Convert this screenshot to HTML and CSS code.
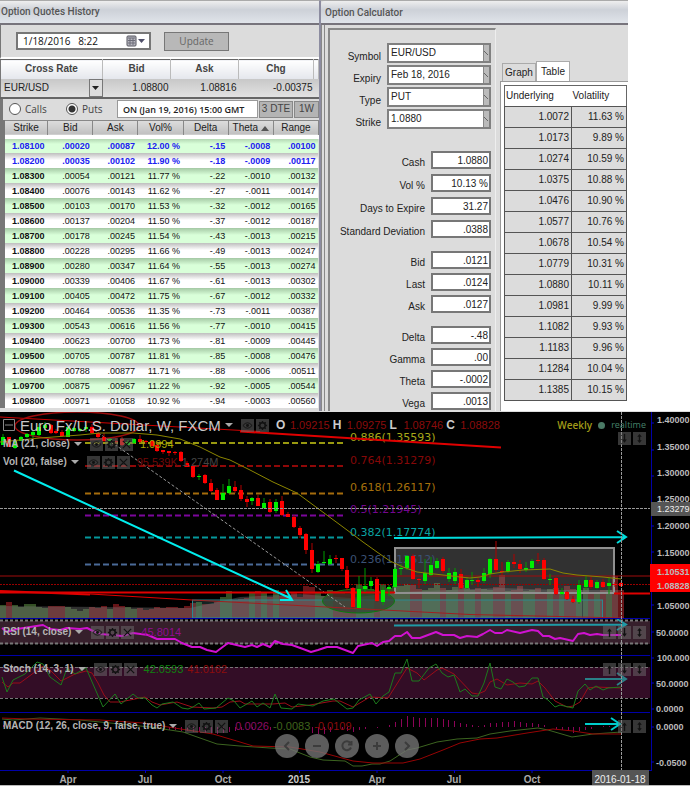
FILE: index.html
```html
<!DOCTYPE html>
<html lang="en">
<head>
<meta charset="utf-8">
<title>Option Quotes History</title>
<link rel="stylesheet" href="styles.css">
</head>
<body>
<svg class="defs" aria-hidden="true">
  <symbol id="eye" viewBox="0 0 12 12"><path d="M1 6Q6 0 11 6Q6 12 1 6Z" fill="none" stroke="currentColor"/><circle cx="6" cy="6" r="1.6" fill="currentColor"/></symbol>
  <symbol id="gear" viewBox="0 0 12 12"><circle cx="6" cy="6" r="3" fill="none" stroke="currentColor" stroke-width="1.6"/><path d="M6 1V3M6 9V11M1 6H3M9 6H11M2.5 2.5L4 4M8 8L9.500 9.500M9.500 2.500L8 4M4 8L2.500 9.500" stroke="currentColor" stroke-width="1.5"/></symbol>
  <symbol id="cross" viewBox="0 0 12 12"><path d="M2 2L10 10M10 2L2 10" stroke="currentColor" stroke-width="1.3"/></symbol>
  <symbol id="up" viewBox="0 0 12 12"><path d="M6 11V3" stroke="currentColor" stroke-width="1.5"/><path d="M3.500 5L6 1.500L8.500 5Z" fill="currentColor"/></symbol>
  <symbol id="down" viewBox="0 0 12 12"><path d="M6 1V9" stroke="currentColor" stroke-width="1.500"/><path d="M3.500 7L6 10.500L8.500 7Z" fill="currentColor"/></symbol>
  <symbol id="updown" viewBox="0 0 12 12"><path d="M6 3V9" stroke="currentColor" stroke-width="1.500"/><path d="M3.500 4L6 1L8.500 4ZM3.500 8L6 11L8.500 8Z" fill="currentColor"/></symbol>
</svg>
<main>
<div class="windows">
  <section class="window quotes">
    <h1 class="title">Option Quotes History</h1>
    <form class="toolbar">
      <div class="date"><input type="text" aria-label="Date and time" value="1/18/2016   8:22"><svg width="20" height="12" viewBox="0 0 20 12"><rect x="1" y="1" width="9" height="10" rx="1" fill="#b8b8c0" stroke="#55555f"/><path d="M2 3H9M2 5.500H9M2 8H9M4 3V10M7 3V10" stroke="#6c6c78"/><path d="M12 4H19L15.500 8Z" fill="#50506a"/></svg></div>
      <button type="button" class="update">Update</button>
    </form>
    <table class="rates">
      <thead><tr><th>Cross Rate</th><th>Bid</th><th>Ask</th><th>Chg</th><th></th></tr></thead>
      <tbody><tr><td><span class="pair">EUR/USD<button type="button" aria-label="Choose pair"><svg width="7" height="4" viewBox="0 0 7 4"><path d="M0 0H7L3.500 4Z" fill="#222"/></svg></button></span></td><td>1.08800</td><td>1.08816</td><td colspan="2">-0.00375</td></tr></tbody>
    </table>
    <form class="filters">
      <label class="kind calls"><input type="radio" name="kind">Calls</label>
      <label class="kind"><input type="radio" name="kind" checked>Puts</label>
      <input class="expiry" type="text" aria-label="Expiry" value="ON (Jan 19, 2016) 15:00 GMT">
      <button type="button" class="term">3 DTE</button>
      <button type="button" class="term short">1W</button>
    </form>
    <table class="chain">
      <thead><tr><th>Strike</th><th>Bid</th><th>Ask</th><th>Vol%</th><th>Delta</th><th>Theta <svg width="8" height="5" viewBox="0 0 8 5"><path d="M0 5L4 0L8 5Z" fill="#555"/></svg></th><th>Range</th></tr></thead>
      <tbody>
        <tr class="picked"><td>1.08100</td><td>.00020</td><td>.00087</td><td>12.00 %</td><td>-.15</td><td>-.0008</td><td>.00100</td></tr>
        <tr class="picked"><td>1.08200</td><td>.00035</td><td>.00102</td><td>11.90 %</td><td>-.18</td><td>-.0009</td><td>.00117</td></tr>
        <tr><td>1.08300</td><td>.00054</td><td>.00121</td><td>11.77 %</td><td>-.22</td><td>-.0010</td><td>.00132</td></tr>
        <tr><td>1.08400</td><td>.00076</td><td>.00143</td><td>11.62 %</td><td>-.27</td><td>-.0011</td><td>.00147</td></tr>
        <tr><td>1.08500</td><td>.00103</td><td>.00170</td><td>11.53 %</td><td>-.32</td><td>-.0012</td><td>.00165</td></tr>
        <tr><td>1.08600</td><td>.00137</td><td>.00204</td><td>11.50 %</td><td>-.37</td><td>-.0012</td><td>.00187</td></tr>
        <tr><td>1.08700</td><td>.00178</td><td>.00245</td><td>11.54 %</td><td>-.43</td><td>-.0013</td><td>.00215</td></tr>
        <tr><td>1.08800</td><td>.00228</td><td>.00295</td><td>11.66 %</td><td>-.49</td><td>-.0013</td><td>.00247</td></tr>
        <tr><td>1.08900</td><td>.00280</td><td>.00347</td><td>11.64 %</td><td>-.55</td><td>-.0013</td><td>.00274</td></tr>
        <tr><td>1.09000</td><td>.00339</td><td>.00406</td><td>11.67 %</td><td>-.61</td><td>-.0013</td><td>.00302</td></tr>
        <tr><td>1.09100</td><td>.00405</td><td>.00472</td><td>11.75 %</td><td>-.67</td><td>-.0012</td><td>.00332</td></tr>
        <tr><td>1.09200</td><td>.00464</td><td>.00536</td><td>11.35 %</td><td>-.73</td><td>-.0011</td><td>.00387</td></tr>
        <tr><td>1.09300</td><td>.00543</td><td>.00616</td><td>11.56 %</td><td>-.77</td><td>-.0010</td><td>.00415</td></tr>
        <tr><td>1.09400</td><td>.00623</td><td>.00700</td><td>11.73 %</td><td>-.81</td><td>-.0009</td><td>.00445</td></tr>
        <tr><td>1.09500</td><td>.00705</td><td>.00787</td><td>11.81 %</td><td>-.85</td><td>-.0008</td><td>.00476</td></tr>
        <tr><td>1.09600</td><td>.00788</td><td>.00877</td><td>11.71 %</td><td>-.88</td><td>-.0006</td><td>.00511</td></tr>
        <tr><td>1.09700</td><td>.00875</td><td>.00967</td><td>11.22 %</td><td>-.92</td><td>-.0005</td><td>.00544</td></tr>
        <tr><td>1.09800</td><td>.00971</td><td>.01058</td><td>10.92 %</td><td>-.94</td><td>-.0003</td><td>.00560</td></tr>
      </tbody>
    </table>
  </section>
  <section class="window calc">
    <h2 class="title">Option Calculator</h2>
    <div class="calc-body">
      <form class="fields">
        <div class="group picks">
          <label for="symbol">Symbol</label><select id="symbol"><option>EUR/USD</option></select>
          <label for="exp">Expiry</label><select id="exp"><option>Feb 18, 2016</option></select>
          <label for="type">Type</label><select id="type"><option>PUT</option></select>
          <label for="strike">Strike</label><select id="strike"><option>1.0880</option></select>
        </div>
        <div class="group wide">
          <label for="cash">Cash</label><input id="cash" value="1.0880">
          <label for="vol">Vol %</label><input id="vol" value="10.13 %">
          <label for="days">Days to Expire</label><input id="days" value="31.27">
          <label for="dev">Standard Deviation</label><input id="dev" value=".0388">
        </div>
        <div class="group">
          <label for="bid">Bid</label><input id="bid" value=".0121">
          <label for="last">Last</label><input id="last" value=".0124">
          <label for="ask">Ask</label><input id="ask" value=".0127">
        </div>
        <div class="group">
          <label for="delta">Delta</label><input id="delta" value="-.48">
          <label for="gamma">Gamma</label><input id="gamma" value=".00">
          <label for="theta">Theta</label><input id="theta" value="-.0002">
          <label for="vega">Vega</label><input id="vega" value=".0013">
        </div>
      </form>
      <div class="result">
        <div class="tabs"><button type="button">Graph</button><button type="button" class="active">Table</button></div>
        <div class="sheet">
          <table class="smile">
            <thead><tr><th>Underlying</th><th>Volatility</th></tr></thead>
            <tbody>
              <tr><td>1.0072</td><td>11.63 %</td></tr>
              <tr><td>1.0173</td><td>9.89 %</td></tr>
              <tr><td>1.0274</td><td>10.59 %</td></tr>
              <tr><td>1.0375</td><td>10.88 %</td></tr>
              <tr><td>1.0476</td><td>10.90 %</td></tr>
              <tr><td>1.0577</td><td>10.76 %</td></tr>
              <tr><td>1.0678</td><td>10.54 %</td></tr>
              <tr><td>1.0779</td><td>10.31 %</td></tr>
              <tr><td>1.0880</td><td>10.11 %</td></tr>
              <tr><td>1.0981</td><td>9.99 %</td></tr>
              <tr><td>1.1082</td><td>9.93 %</td></tr>
              <tr><td>1.1183</td><td>9.96 %</td></tr>
              <tr><td>1.1284</td><td>10.04 %</td></tr>
              <tr><td>1.1385</td><td>10.15 %</td></tr>
            </tbody>
          </table>
        </div>
      </div>
    </div>
  </section>
</div>
<section class="chart">
  <svg class="plot" viewBox="0 412 690 374" role="img" aria-label="Euro Fx/U.S. Dollar weekly chart">
    <g id="volume"></g>
    <path d="M0 606L100 607L190 608L240 597L300 594L350 598L400 592L500 588L560 590L618 590V618H0Z" fill="#777" fill-opacity=".4"/>
    <rect x="192.500" y="600" width="410" height="18" fill="#5a9a9a" fill-opacity=".22" stroke="#2a8a90"/>
    <rect x="395" y="548" width="219" height="45" fill="#808080" fill-opacity=".38" stroke="#909090" stroke-width="2"/>
    <ellipse cx="358.500" cy="601" rx="36" ry="12" fill="#2a3a2a" fill-opacity=".6" stroke="#0c7a0c"/>
    <g class="fib">
      <path d="M85 443H346" stroke="#999910"/><path d="M85 466H346" stroke="#8f0808"/><path d="M85 493.500H346" stroke="#a56c0c"/>
      <path d="M85 515.500H346" stroke="#7c069c"/><path d="M85 537.500H346" stroke="#05989c"/><path d="M85 564.500H346" stroke="#4a6a98"/>
    </g>
    <g class="fib-text">
      <text x="350" y="441" fill="#a8a818">0.886(1.35593)</text><text x="350" y="464" fill="#860808">0.764(1.31279)</text>
      <text x="350" y="491" fill="#a5700c">0.618(1.26117)</text><text x="350" y="513" fill="#74068f">0.5(1.21945)</text>
      <text x="350" y="536" fill="#0aa3a3">0.382(1.17774)</text><text x="350" y="563" fill="#3b5174">0.236(1.12612)</text>
    </g>
    <path d="M90 427L345 607" stroke="#999" stroke-dasharray="3 2"/>
    <g stroke="#e00000" fill="none">
      <path d="M0 576H650" stroke="#a00c0c"/><path d="M0 584.500H650" stroke="#900" stroke-dasharray="2 1"/>
      <path d="M0 592.500H395M614 593.500H650" stroke-width="2"/><path d="M0 591L90 594.500" stroke-width="2"/><path d="M90 594L192 600"/><path d="M192 600L470 614.500L624 618" stroke="#a02020"/>
      <path d="M0 417L260 431.500" stroke="#c00"/><path d="M240 431.500L501 447.500" stroke-width="2"/>
      <ellipse cx="77" cy="426" rx="62" ry="14" stroke="#9c0c0c" stroke-width="1.500"/>
    </g>
    <g id="candles"></g>
    <path id="average" class="line" stroke="#8c8600"/>
    <g class="arrows">
      <path d="M14 470.500L292 599M280 600L292 600L286 590" stroke="#0ee"/>
      <path d="M394 538L626 537M617 531L626 537L617 543" stroke="#0dd"/>
    </g>
    <rect x="0" y="621" width="650" height="23" fill="#361f2b"/><rect x="0" y="667" width="650" height="31" fill="#330d26"/>
    <g stroke="#777" stroke-dasharray="3 2"><path d="M0 620.500H650M0 643.500H650" stroke-width="2"/><path d="M0 667.500H650M0 698.500H650"/></g>
    <path id="rsi" class="line" stroke="#d012d0" stroke-width="2"/>
    <path id="stoch-d" class="line" stroke="#9c0c18"/><path id="stoch-k" class="line" stroke="#1c7a1c"/>
    <g id="histogram" fill="#8c0458"></g>
    <path id="macd" class="line" stroke="#3c6420"/><path id="signal" class="line" stroke="#960404"/>
    <g class="arrows">
      <path d="M394 625.500L626 624.500M617 619L626 624.500L617 630" stroke="#1f9aa6"/>
      <path d="M585 679H626M617 673L626 679L617 685" stroke="#2a8088"/>
      <path d="M585 724H620M611 718L620 724L611 730" stroke="#0cc"/>
    </g>
    <path d="M0 618.500H650M0 655.500H650M0 712.500H650M0 770.500H652M651.500 412V770" stroke="#0000a8"/>
    <path d="M651 423H654M651 450H654M651 476H654M651 526H654M651 552H654M651 605H654M651 632H654M651 658H654M651 683H654M651 709H654M651 727H654M651 762H654M68 770V773M145.500 770V773M223 770V773M299.500 770V773M377 770V773M454.500 770V773M532 770V773" stroke="#0000c8"/>
    <path d="M0 508.500H650M621.500 412V774" stroke="#999" stroke-dasharray="3 1"/>
    <g class="scale">
      <text x="657" y="423">1.40000</text><text x="657" y="450">1.35000</text><text x="657" y="476">1.30000</text><text x="657" y="502">1.25000</text><text x="657" y="529">1.20000</text><text x="657" y="556">1.15000</text><text x="657" y="609">1.05000</text>
      <rect x="651" y="502" width="39" height="14" fill="#555"/><text x="657" y="512" class="cursor">1.23279</text>
      <rect x="650" y="564" width="40" height="28" fill="#f00"/><text x="657" y="575">1.10531</text><text x="657" y="589">1.08828</text>
      <text x="656" y="636">50.0000</text><text x="657" y="661">100.000</text><text x="656" y="687">50.0000</text><text x="656" y="712">0.0000</text><text x="656" y="730">0.0000</text><text x="656" y="766">-0.0500</text>
    </g>
    <g class="time">
      <text x="68" y="783">Apr</text><text x="145" y="783">Jul</text><text x="223" y="783">Oct</text><text x="299" y="783" class="year">2015</text><text x="377" y="783">Apr</text><text x="454" y="783">Jul</text><text x="532" y="783">Oct</text>
      <rect x="592" y="770" width="57" height="15" fill="#555"/><text x="620" y="783" class="date-label">2016-01-18</text>
    </g>
    <rect x="0" y="785" width="690" height="1" fill="#bbb"/>
  </svg>
  <div class="legend main-legend">
    <svg width="12" height="12" viewBox="0 0 12 12"><path d="M.5 .5H11.500V11.500H.5ZM2 6H10" fill="none" stroke="#888"/></svg>
    <strong class="name">Euro Fx/U.S. Dollar, W, FXCM</strong><i class="caret"></i>
    <span class="tools"><button aria-label="Hide"><svg><use href="#eye"/></svg></button><button aria-label="Format"><svg><use href="#gear"/></svg></button></span>
    <span class="ohlc"><b>O</b>1.09215</span><span class="ohlc"><b>H</b>1.09275</span><span class="ohlc"><b>L</b>1.08746</span><span class="ohlc"><b>C</b>1.08828</span>
  </div>
  <div class="legend ma"><b>MA (21, close)</b><i class="caret"></i><span class="tools"><button aria-label="Hide"><svg><use href="#eye"/></svg></button><button aria-label="Format"><svg><use href="#gear"/></svg></button><button aria-label="Remove"><svg><use href="#cross"/></svg></button></span><span class="yellow">1.0994</span></div>
  <div class="legend vol"><b>Vol (20, false)</b><i class="caret"></i><span class="tools"><button aria-label="Hide"><svg><use href="#eye"/></svg></button><button aria-label="Format"><svg><use href="#gear"/></svg></button><button aria-label="Remove"><svg><use href="#cross"/></svg></button></span><span class="dark-red">95.539K</span><span class="gray">1.274M</span></div>
  <div class="legend rsi"><b>RSI (14, close)</b><i class="caret"></i><span class="tools"><button aria-label="Hide"><svg><use href="#eye"/></svg></button><button aria-label="Format"><svg><use href="#gear"/></svg></button><button aria-label="Remove"><svg><use href="#cross"/></svg></button></span><span class="magenta">45.8014</span></div>
  <div class="legend stoch"><b>Stoch (14, 3, 1)</b><i class="caret"></i><span class="tools"><button aria-label="Hide"><svg><use href="#eye"/></svg></button><button aria-label="Format"><svg><use href="#gear"/></svg></button><button aria-label="Remove"><svg><use href="#cross"/></svg></button></span><span class="green">42.0593</span><span class="red">41.0162</span></div>
  <div class="legend macd"><b>MACD (12, 26, close, 9, false, true)</b><i class="caret"></i><span class="tools"><button aria-label="Hide"><svg><use href="#eye"/></svg></button><button aria-label="Format"><svg><use href="#gear"/></svg></button><button aria-label="Remove"><svg><use href="#cross"/></svg></button></span><span class="pink">0.0026</span><span class="olive">-0.0083</span><span class="red">-0.0109</span></div>
  <div class="status"><span class="weekly">Weekly</span><i class="dot"></i><span>realtime</span></div>
  <div class="tools pane-tools main-tools"><button aria-label="Move down"><svg><use href="#down"/></svg></button><button aria-label="Maximize"><svg><use href="#updown"/></svg></button></div>
  <div class="tools pane-tools rsi-tools"><button aria-label="Move up"><svg><use href="#up"/></svg></button><button aria-label="Move down"><svg><use href="#down"/></svg></button><button aria-label="Maximize"><svg><use href="#updown"/></svg></button></div>
  <div class="tools pane-tools stoch-tools"><button aria-label="Move up"><svg><use href="#up"/></svg></button><button aria-label="Move down"><svg><use href="#down"/></svg></button><button aria-label="Maximize"><svg><use href="#updown"/></svg></button></div>
  <div class="tools pane-tools macd-tools"><button aria-label="Move up"><svg><use href="#up"/></svg></button><button aria-label="Maximize"><svg><use href="#updown"/></svg></button></div>
  <div class="nav">
    <button aria-label="Scroll left"><svg viewBox="0 0 24 24"><path d="M14 8L10 12L14 16"/></svg></button>
    <button aria-label="Zoom out"><svg viewBox="0 0 24 24"><path d="M8 12H16"/></svg></button>
    <button aria-label="Reset"><svg viewBox="0 0 24 24"><path d="M15.500 9A4.500 4.500 0 1 0 16 13.500M16.500 7V10.500H13"/></svg></button>
    <button aria-label="Zoom in"><svg viewBox="0 0 24 24"><path d="M8 12H16M12 8V16"/></svg></button>
    <button aria-label="Scroll right"><svg viewBox="0 0 24 24"><path d="M10 8L14 12L10 16"/></svg></button>
  </div>
</section>
</main>
<script src="chart.js"></script>
</body>
</html>
```
FILE: styles.css
```css
* { box-sizing: border-box; }
body { margin: 0; background: #fff; color: #333; font: 10px/12px "Liberation Sans", Arial, sans-serif; }
button, input, select { font: inherit; color: inherit; margin: 0; padding: 0; border-radius: 0; }
table { border-collapse: collapse; table-layout: fixed; width: 100%; }
th, td { padding: 0; }
.defs { position: absolute; width: 0; height: 0; }

.windows { display: grid; grid-template-columns: 320fr 308fr 62fr; border-bottom: 1px solid #ddd; }
.window { border-top: 1px solid #aaa; background: #dcdcdc; min-width: 0; }
.title { margin: 0; height: 24px; border-bottom: 2px solid #77747c; background: linear-gradient(#eee, #cdd1d8 40%, #e0e4ea); color: #555; font: 500 10px/22px Roboto, sans-serif; padding-left: 1px; }
.quotes { border-right: 1px solid #8c8ca0; }
.toolbar { display: flex; align-items: center; gap: 13px; height: 34px; padding-left: 15px; border-left: 1px solid #777; border-bottom: 2px solid #fff; }
.date { display: flex; align-items: center; width: 135px; height: 18px; background: #fff; border: 2px solid #777; padding-right: 3px; }
.date input { flex: 1; min-width: 0; border: 0; padding-left: 5px; font: 10px/14px "Open Sans", sans-serif; background: none; color: #111; white-space: pre; }
.update { width: 65px; height: 19px; border: 1px solid #777; background: #b8b8b8; color: #666; font: 10px "Open Sans", sans-serif; }

.rates { border-top: 1px solid #666; border-bottom: 2px solid #666; border-left: 1px solid #777; }
.rates th { height: 19px; background: linear-gradient(#fff, #e4e6ec); border-right: 1px solid #bbb; color: #444; }
.rates th:nth-child(1) { width: 102px; }
.rates th:nth-child(4) { width: 75px; }
.rates th:nth-child(5) { width: 5px; }
.rates td { height: 19px; background: linear-gradient(#c8c8c8, #e2e2e2); text-align: right; color: #222; }
.rates td:not(:first-child):not(:last-child) { padding-right: 2px; }
.rates td:last-child { padding-right: 6px; }
.pair { display: flex; align-items: center; justify-content: space-between; padding-left: 3px; }
.pair button { display: grid; place-items: center; width: 14px; height: 18px; border: 1px solid #777; background: #ddd; }

.filters { display: flex; align-items: center; height: 21px; border-left: 3px solid #777; }
.kind { display: flex; align-items: center; gap: 4px; font: 10px "Open Sans", sans-serif; color: #444; flex: 0 0 46px; }
.kind.calls { margin-left: 6px; flex-basis: 57px; }
.kind input { appearance: none; width: 12px; height: 12px; border: 1px solid #555; border-radius: 50%; background: #fff; }
.kind input:checked { background: radial-gradient(circle, #333 3px, #fff 4px); }
.expiry { flex: 1; min-width: 0; height: 18px; border: 1px solid #999; background: #fff; margin-left: 5px; padding-left: 5px; font: 600 9px "Open Sans", sans-serif; color: #222; }
.term { width: 34px; height: 17px; border: 1px solid #888; background: #b4b4b4; color: #444; margin-left: 1px; }
.term.short { width: 25px; }

.chain { border-left: 5px solid #777; font-size: 9px; }
.chain th { height: 17px; font: 10px "Liberation Sans", sans-serif; background: linear-gradient(#ddd, #c0c0c0); border: solid #888; border-width: 1px 1px 1px 0; color: #222; white-space: nowrap; }
.chain thead { border-bottom: 4px solid #fff; }
.chain td { height: 15px; line-height: 14px; text-align: right; padding-right: 3px; color: #111; white-space: nowrap; }
.chain td:first-child { font-weight: bold; color: #111; }
.chain tr.picked td { font-weight: bold; color: #2020f0; }
.chain tbody tr { background: linear-gradient(#bebebe, #fff 7px); }
.chain tbody tr:nth-child(odd) { background: linear-gradient(#a4c8a4, #d9ffd9 7px); }

.calc { border-left: 1px solid #8c8ca0; }
.calc .title { padding-left: 4px; line-height: 24px; border-radius: 4px 0 0; }
.calc-body { display: flex; border-left: 4px solid #888; border-left-style: double; min-height: 385px; }
.fields { flex: 0 1 168px; margin: 3px 0 0 3px; border: solid #888; border-width: 2px 1px 0 2px; border-right-color: #eee; padding: 13px 4px 0 0; }
.group { display: grid; grid-template-columns: 1fr 60px; column-gap: 6px; row-gap: 4px; margin-bottom: 13px; text-align: right; color: #222; }
.group:last-child { margin-bottom: 0; }
.group.wide { row-gap: 5px; }
.group label { align-self: end; white-space: nowrap; line-height: 13px; }
.group input { width: 100%; height: 18px; border: 2px solid #777; background: #fff; text-align: right; padding-right: 1px; }
.picks { grid-template-columns: 1fr 104px; row-gap: 2px; margin-bottom: 22px; }
.picks select { appearance: none; width: 100%; height: 20px; border: 2px solid #808080; padding-left: 2px; background: linear-gradient(45deg, transparent 45%, #666 45% 60%, transparent 60%) right 1px center / 4px 4px no-repeat, linear-gradient(90deg, #fff calc(100% - 6px), #888 calc(100% - 6px) calc(100% - 5px), #bbb calc(100% - 5px)); }
.result { flex: 1; min-width: 0; padding-top: 36px; margin-left: 4px; }
.tabs { display: flex; align-items: flex-end; padding-left: 2px; }
.tabs button { width: 34px; height: 18px; border: 1px solid #aaa; border-bottom: 0; background: #dcdcdc; color: #222; }
.tabs .active { height: 20px; background: #fff; }
.sheet { background: #fff; border: solid #999; border-width: 1px 0 0 1px; padding: 3px 1px 10px 3px; }
.smile { border: 1px solid #666; color: #222; }
.smile th { height: 21px; text-align: left; font-weight: normal; padding-left: 1px; }
.smile th:first-child { width: 67px; }
.smile td { height: 21px; background: #dcdcdc; border: 1px solid #555; text-align: right; line-height: 17px; padding: 0 2px 2px 0; }

.chart { position: relative; background: #000; }
.plot { display: block; width: 100%; height: auto; }
.line { fill: none; stroke-linejoin: round; }
.fib path { stroke-width: 2; stroke-dasharray: 6 3; }
.fib-text { font: 11px "DejaVu Sans", sans-serif; }
.arrows path { fill: none; stroke-width: 2; }
.scale { font: bold 9px "Liberation Sans", sans-serif; fill: #bbb; }
.scale .cursor { font-weight: normal; fill: #eee; }
.time { font: bold 10px "Liberation Sans", sans-serif; fill: #aaa; }
.time text { text-anchor: middle; }
.time .year { fill: #ccc; }
.time .date-label { font-weight: normal; fill: #eee; }

.legend { position: absolute; left: 3px; display: flex; align-items: center; height: 14px; font-size: 11px; white-space: nowrap; color: #b4b4b4; }
.legend > span + span { margin-left: 4px; }
.legend b { font-size: 10px; }
.legend > .tools { margin: 0 3px 0 8px; }
.caret { width: 0; height: 0; border: 4px solid transparent; border-top-color: #aaa; border-bottom-width: 0; margin-left: 4px; }
.tools { display: flex; gap: 2px; }
.tools button { display: grid; place-items: center; width: 13px; height: 13px; border: 0; background: rgba(110, 110, 110, .5); color: #111; }
.tools svg { width: 11px; height: 11px; }
.main-legend { top: 6px; }
.name { font: 15px "Liberation Sans", sans-serif; color: #c8c8c8; margin-left: 5px; }
.main-legend > .tools { margin-right: 7px; }
.main-legend .ohlc { margin: 0 3px 0 0; color: #8c0c0c; }
.ohlc b { display: inline-block; width: 14px; font-size: 12px; color: #ccc; }
.ma { top: 25px; }
.vol { top: 43px; }
.rsi { top: 213px; }
.stoch { top: 250px; }
.macd { top: 307px; }
.yellow { color: #aaa800; }
.dark-red { color: #700808; }
.gray { color: #444; }
.magenta { color: #900c90; }
.green { color: #108010; }
.red { color: #8c0c0c; }
.pink { color: #8c0c64; }
.olive { color: #40641c; }
.status { position: absolute; top: 7px; right: 44px; display: flex; align-items: center; gap: 6px; font: 9px/12px "Open Sans", sans-serif; color: #45806a; }
.weekly { font-size: 10px; font-weight: 600; color: #a09a18; }
.dot { width: 7px; height: 7px; border-radius: 50%; background: #4a7a65; }
.pane-tools { position: absolute; right: 44px; }
.main-tools { top: 20px; }
.rsi-tools { top: 214px; }
.stoch-tools { top: 251px; }
.macd-tools { top: 308px; }
.nav { position: absolute; top: 322px; left: 275px; display: flex; gap: 6px; }
.nav button { width: 24px; height: 24px; border: 0; border-radius: 50%; background: rgba(115, 115, 115, .8); }
.nav svg { display: block; width: 24px; height: 24px; fill: none; stroke: #3c3c3c; stroke-width: 2; }
```
FILE: chart.js
```js
// Candles: [x, high, body top, body bottom, low, rising]
const candles = [
  [3,434,437,445,445,1],[9,437,437,447,447,0],[15,440,441,448,449,1],[21,436,437,441,441,1],[27,433,434,437,438,1],[33,430,432,435,438,1],
  [39,424,427,435,436,1],[45,422,425,428,430,1],[51,424,425,433,434,0],[56,429,431,433,434,0],[62,430,432,436,437,0],[68,426,427,437,437,1],
  [74,427,428,431,432,1],[80,428,429,431,432,1],[86,425,427,429,432,1],[92,424,427,433,434,0],[98,432,433,437,438,0],[104,433,437,441,442,0],
  [110,438,439,441,445,1],[116,438,441,442,444,0],[122,437,439,445,446,0],[128,440,442,445,446,1],[134,438,439,443,444,1],[140,435,439,442,443,0],
  [146,440,441,442,444,0],[152,440,441,446,448,0],[157,443,445,451,452,0],[163,450,450,452,454,0],[169,451,451,453,456,0],[175,451,452,453,455,0],
  [181,451,452,461,462,0],[187,461,463,467,467,0],[193,464,466,477,478,0],[199,474,476,477,480,1],[205,474,475,483,484,0],[211,479,483,491,492,0],
  [217,488,490,500,500,0],[223,484,493,500,500,1],[229,479,486,493,494,1],[235,481,487,491,493,0],[241,485,490,499,501,0],[247,496,499,502,507,0],
  [252,497,498,501,505,1],[258,495,498,506,506,0],[264,498,503,508,509,1],[270,499,502,512,513,0],[276,499,502,511,513,1],[282,496,501,515,516,0],
  [288,512,514,517,517,0],[294,515,517,527,528,0],[300,526,528,535,538,0],[306,533,534,550,554,0],[312,543,550,569,573,0],[318,561,564,572,573,1],
  [324,551,562,563,564,1],[330,555,559,564,565,1],[336,555,558,559,563,0],[342,558,558,569,571,0],[347,566,570,588,590,0],[353,587,588,607,608,0],
  [359,576,589,608,608,1],[365,568,586,589,592,1],[371,577,581,586,590,1],[377,577,579,601,602,0],[383,587,590,602,605,1],[389,585,587,589,596,1],
  [395,567,569,587,588,1],[401,564,568,569,575,1],[407,555,556,568,570,1],[413,554,556,579,580,0],[419,578,579,580,588,0],[425,559,573,581,584,1],
  [431,557,565,575,576,1],[437,558,561,568,569,1],[443,557,559,571,573,0],[449,568,573,579,582,1],[455,568,572,581,584,1],[461,569,574,588,589,0],
  [467,577,580,588,589,1],[472,572,580,581,585,1],[478,578,580,582,587,0],[484,568,573,581,583,1],[490,558,559,574,578,1],[496,541,559,570,572,0],
  [502,562,571,572,575,0],[508,560,562,571,573,1],[514,554,562,564,568,0],[520,560,564,569,573,0],[526,562,568,570,572,1],[532,559,561,568,569,1],
  [538,553,560,561,564,0],[544,558,560,579,580,0],[550,574,579,580,585,1],[556,577,578,594,595,0],[562,588,592,594,595,1],[567,591,592,599,600,0],
  [573,596,599,602,603,0],[579,580,585,602,604,1],[586,576,580,587,590,1],[591,577,580,587,589,0],[597,580,582,588,589,1],[603,579,582,587,588,0],
  [609,577,583,586,594,1],[615,582,584,585,587,0],[621,582,583,586,587,0]
];
const volumeTops = [605,602,605,607,604,604,607,608,606,606,606,607,609,611,609,607,608,606,609,604,606,607,609,608,610,609,607,608,607,607,608,606,603,602,604,604,602,597,591,600,599,598,592,591,592,597,590,596,595,592,597,586,587,592,596,590,591,592,594,588,584,586,589,592,584,588,586,586,584,585,589,590,588,583,588,590,587,583,588,590,588,589,590,587,575,591,590,586,591,590,588,592,589,588,592,586,589,590,588,594,592,590,590,576,590,601];

const svg = "http://www.w3.org/2000/svg";
function bar(parent, x, y, width, height, fill) {
  const rect = document.createElementNS(svg, "rect");
  Object.entries({ x, y, width, height }).forEach(([key, value]) => rect.setAttribute(key, value));
  if (fill) rect.setAttribute("fill", fill);
  parent.append(rect);
}
const candleGroup = document.getElementById("candles");
const volumeGroup = document.getElementById("volume");
candles.forEach(([x, high, top, bottom, low, rising], i) => {
  const color = rising ? "#00f000" : "#ff0000";
  bar(candleGroup, x - 0.5, high, 1, low - high, rising ? "#009a00" : "#b00000");
  bar(candleGroup, x - 2, top, 4, Math.max(1, bottom - top), color);
  if (volumeTops[i]) bar(volumeGroup, x - 3, volumeTops[i], 6, 618 - volumeTops[i], rising ? "#345025" : "#661518");
});

// Each series is a flat list of x, y pairs
const series = {
  average: [0,442,40,438,80,435,100,433,133,433,157,435,180,439,200,447,220,457,230,460,250,470,273,482,297,493,320,510,343,527,363,542,377,552,390,561,403,567,417,572,443,575,460,577,470,578,480,577,490,574,503,572,523,570,550,569,563,573,577,575,603,577,621,579],
  rsi: [2,628,7,632,17,629,43,625,50,629,60,630,67,628,80,629,87,628,93,631,100,634,112,635,122,636,133,633,148,635,157,639,175,639,182,643,192,647,200,647,207,650,216,652,228,643,245,647,252,645,257,647,263,644,270,647,275,641,283,644,292,645,303,649,311,652,318,650,327,647,337,647,345,650,353,653,358,646,372,643,377,646,383,642,389,641,395,636,401,636,407,632,412,638,420,638,436,632,443,635,454,635,460,638,467,636,477,637,483,634,490,630,495,633,502,633,507,630,520,633,532,630,538,631,543,636,549,636,555,639,560,638,573,641,578,634,584,633,590,635,597,634,603,635,621,635],
  "stoch-k": [2,677,7,692,13,680,25,674,37,662,43,664,50,677,61,685,67,668,75,674,86,668,103,707,115,694,121,704,133,694,138,698,145,698,152,705,157,708,162,704,173,702,182,708,188,709,193,707,199,703,204,709,216,708,228,698,234,701,240,708,252,701,257,707,263,703,270,708,275,694,281,708,292,709,298,704,313,706,323,701,334,699,347,709,353,708,359,700,370,694,376,704,383,696,389,692,395,673,401,673,407,659,412,681,419,681,429,668,436,664,442,673,448,677,454,675,460,692,465,689,472,696,478,696,484,683,490,663,495,687,501,689,507,679,513,682,519,687,525,686,532,678,538,678,543,697,548,700,555,707,560,705,573,708,578,691,585,684,590,690,596,686,603,690,608,688,621,687],
  "stoch-d": [2,682,8,687,13,683,20,683,43,666,50,670,61,681,75,674,86,671,92,673,98,683,104,695,110,702,120,702,145,697,152,702,160,705,177,702,192,707,213,708,222,707,230,702,240,701,245,704,273,704,285,703,292,707,310,705,333,701,340,701,353,707,370,697,388,698,407,668,417,673,424,680,437,670,442,668,454,674,472,693,478,694,485,691,490,682,497,679,507,685,520,683,532,684,538,681,545,688,555,701,567,707,573,706,580,702,588,688,596,687,621,688],
  macd: [2,719,13,720,40,718,80,720,110,723,150,727,183,732,200,738,217,744,240,746,270,748,290,749,310,757,323,760,345,761,353,766,362,766,372,764,380,764,390,761,407,750,417,748,437,742,457,739,477,738,490,734,510,731,538,728,548,730,572,737,593,734,621,732],
  signal: [2,718,27,719,100,720,143,723,187,730,213,734,240,742,253,746,290,747,320,752,353,761,373,763,403,763,420,759,443,750,460,743,480,739,497,738,527,733,553,729,573,731,593,734,621,734]
};
Object.entries(series).forEach(([id, points]) => {
  document.getElementById(id).setAttribute("d", "M" + points.join(" "));
});

// Histogram heights, positive above the zero line
const histogram = [[3,2],[9,2],[21,1],[45,1],[98,-2],[104,-3],[110,-3],[122,-2],[134,-2],[157,-2],[169,-3],[175,-3],[181,-4],[187,-4],[193,-5],[199,-5],[205,-6],[211,-7],[217,-7],[223,-6],[229,-5],[235,-4],[241,-3],[252,-2],[270,-3],[312,-6],[318,-7],[324,-7],[330,-5],[342,-3],[347,-4],[353,-5],[359,-3],[365,-2],[377,-1],[389,2],[395,5],[401,8],[407,11],[413,10],[419,9],[425,9],[431,9],[437,9],[443,8],[448,7],[454,6],[460,4],[466,3],[472,2],[478,1],[484,2],[490,4],[496,4],[502,5],[508,5],[514,6],[520,5],[526,4],[532,4],[538,3],[544,2],[556,-2],[562,-3],[568,-4],[573,-6],[579,-4],[585,-3],[591,-2],[603,1],[609,1]];
const histogramGroup = document.getElementById("histogram");
histogram.forEach(([x, value]) => bar(histogramGroup, x, value > 0 ? 727 - value : 727, 1, Math.abs(value)));
```
